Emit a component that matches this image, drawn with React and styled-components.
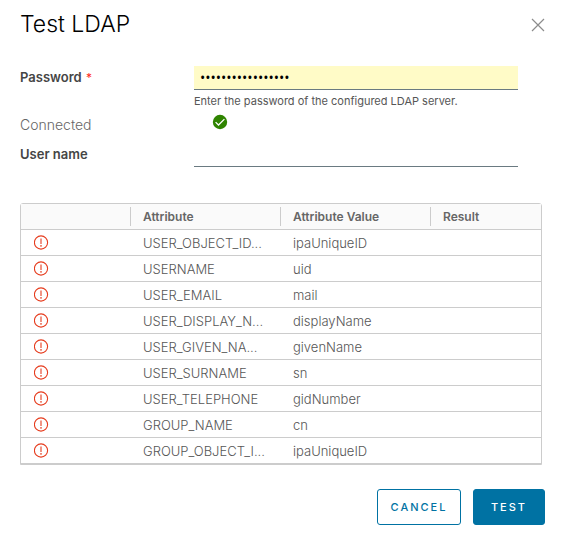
import React from 'react';
import styled, { createGlobalStyle } from 'styled-components';

const GlobalStyle = createGlobalStyle`
  * {
    box-sizing: border-box;
  }

  body {
    margin: 0;
    background: #ffffff;
    color: #565656;
    font-family: Inter, 'Liberation Sans', sans-serif;
    font-size: 13px;
  }
`;

const Dialog = styled.section`
  padding: 8px 19px 8px 20px;
`;

const DialogHeader = styled.header`
  display: flex;
  align-items: center;
  justify-content: space-between;
  height: 32px;
`;

const Title = styled.h1`
  margin: 0;
  color: #000000;
  font-size: 23px;
  font-weight: 300;
  line-height: 30px;
`;

const CloseButton = styled.button`
  display: flex;
  padding: 2px 0 0;
  border: 0;
  background: none;
  color: #8c8c8c;
  cursor: pointer;
`;

const DialogBody = styled.div`
  padding-right: 3px;
`;

const Form = styled.form`
  padding: 26px 24px 0 0;
`;

const FormRow = styled.div`
  display: grid;
  grid-template-columns: 174px 1fr;
`;

const Label = styled.label`
  color: #454545;
  font-size: 13px;
  font-weight: 600;
  line-height: 22px;
`;

const Required = styled.span`
  margin-left: 1px;
  color: #ff2a1a;
  font-size: 12px;
  font-weight: 400;
`;

const TextInput = styled.input`
  display: block;
  width: 100%;
  height: 24px;
  padding: 0 6px;
  border: 0;
  border-bottom: 1px solid #6a7a81;
  border-radius: 0;
  outline: 0;
  background: ${(props) => (props.$filled ? '#fffbc7' : 'transparent')};
  color: #000000;
  font-family: 'Open Sans', sans-serif;
  font-size: 14px;
`;

const HelpText = styled.p`
  margin: 0;
  padding-top: 3px;
  color: #565656;
  font-size: 11px;
  line-height: 16px;
`;

const StatusText = styled.span`
  padding: 4px 0 6px;
  color: #666666;
  font-size: 14px;
  font-weight: 300;
  line-height: 24px;
`;

const StatusIcon = styled.svg`
  display: block;
  margin: 5px 0 0 18px;
`;

const AttributeTable = styled.table`
  width: 100%;
  margin-top: 36px;
  border: 1px solid #cccccc;
  border-radius: 3px 3px 0 0;
  border-spacing: 0;
  table-layout: fixed;
`;

const HeaderCell = styled.th`
  width: ${(props) => props.$width || 'auto'};
  height: 26px;
  padding: 0;
  border-bottom: 1px solid #cccccc;
  background: #fafafa;
  color: #666666;
  font-size: 12px;
  font-weight: 600;
  line-height: 19px;
  text-align: left;
`;

const HeaderText = styled.div`
  height: 19px;
  padding-left: 12px;
  border-left: 1px solid ${(props) => (props.$plain ? 'transparent' : '#cccccc')};
`;

const Cell = styled.td`
  height: 26px;
  padding: 0 12px 0 13px;
  border-bottom: 1px solid #cccccc;
  color: #565656;
  font-size: 13px;
  font-weight: 300;
  line-height: 24px;
  white-space: nowrap;
`;

const Alert = styled.svg`
  display: block;
`;

const DialogFooter = styled.footer`
  display: flex;
  justify-content: flex-end;
  gap: 12px;
  padding-top: 24px;
`;

const Button = styled.button`
  height: 36px;
  min-width: ${(props) => (props.$primary ? '72px' : '84px')};
  padding: 0 12px;
  border: 1px solid #0072a3;
  border-radius: 3px;
  background: ${(props) => (props.$primary ? '#0072a3' : '#ffffff')};
  color: ${(props) => (props.$primary ? '#ffffff' : '#0072a3')};
  font-family: inherit;
  font-size: 11px;
  font-weight: 500;
  letter-spacing: 2px;
  cursor: pointer;
`;

const attributes = [
  { name: 'USER_OBJECT_ID...', value: 'ipaUniqueID' },
  { name: 'USERNAME', value: 'uid' },
  { name: 'USER_EMAIL', value: 'mail' },
  { name: 'USER_DISPLAY_N...', value: 'displayName' },
  { name: 'USER_GIVEN_NA...', value: 'givenName' },
  { name: 'USER_SURNAME', value: 'sn' },
  { name: 'USER_TELEPHONE', value: 'gidNumber' },
  { name: 'GROUP_NAME', value: 'cn' },
  { name: 'GROUP_OBJECT_I...', value: 'ipaUniqueID' },
];

const CloseIcon = () => (
  <svg width="14" height="14" viewBox="0 0 14 14" aria-hidden="true">
    <path d="M1 1l12 12M13 1L1 13" stroke="currentColor" strokeWidth="1.2" />
  </svg>
);

const CheckIcon = () => (
  <StatusIcon width="16" height="16" viewBox="0 0 16 16" aria-hidden="true">
    <circle cx="8" cy="8" r="7.2" fill="#2f8400" />
    <path
      d="M3.6 8.1l2.9 2.9 5.9-5.9"
      fill="none"
      stroke="#ffffff"
      strokeWidth="1.3"
    />
  </StatusIcon>
);

const AlertIcon = () => (
  <Alert width="16" height="16" viewBox="0 0 16 16" aria-hidden="true">
    <circle cx="7" cy="7.5" r="6.6" fill="none" stroke="#e63c1e" strokeWidth="1.1" />
    <path d="M7 3.4v5.6" stroke="#e63c1e" strokeWidth="1.1" />
    <circle cx="7" cy="10.9" r="0.8" fill="#e63c1e" />
  </Alert>
);

const TestForm = () => (
  <Form id="ldap-form" onSubmit={(e) => e.preventDefault()}>
    <FormRow>
      <Label htmlFor="password">
        Password <Required>*</Required>
      </Label>
      <div>
        <TextInput
          id="password"
          type="password"
          autoComplete="off"
          defaultValue="ldap-bind-secret1"
          $filled
        />
        <HelpText>Enter the password of the configured LDAP server.</HelpText>
      </div>
    </FormRow>
    <FormRow>
      <StatusText>Connected</StatusText>
      <CheckIcon />
    </FormRow>
    <FormRow>
      <Label htmlFor="username">User name</Label>
      <div>
        <TextInput id="username" type="text" autoComplete="off" />
      </div>
    </FormRow>
  </Form>
);

const App = () => (
  <>
    <GlobalStyle />
    <Dialog role="dialog" aria-labelledby="dialog-title">
      <DialogHeader>
        <Title id="dialog-title">Test LDAP</Title>
        <CloseButton type="button" aria-label="Close">
          <CloseIcon />
        </CloseButton>
      </DialogHeader>
      <DialogBody>
        <TestForm />
        <AttributeTable>
          <thead>
            <tr>
              <HeaderCell $width="109px">
                <HeaderText $plain />
              </HeaderCell>
              <HeaderCell $width="150px">
                <HeaderText>Attribute</HeaderText>
              </HeaderCell>
              <HeaderCell $width="150px">
                <HeaderText>Attribute Value</HeaderText>
              </HeaderCell>
              <HeaderCell>
                <HeaderText>Result</HeaderText>
              </HeaderCell>
            </tr>
          </thead>
          <tbody>
            {attributes.map((attribute) => (
              <tr key={attribute.name}>
                <Cell>
                  <AlertIcon />
                </Cell>
                <Cell>{attribute.name}</Cell>
                <Cell>{attribute.value}</Cell>
                <Cell />
              </tr>
            ))}
          </tbody>
        </AttributeTable>
      </DialogBody>
      <DialogFooter>
        <Button type="button">CANCEL</Button>
        <Button type="submit" form="ldap-form" $primary>
          TEST
        </Button>
      </DialogFooter>
    </Dialog>
  </>
);

export default App;
